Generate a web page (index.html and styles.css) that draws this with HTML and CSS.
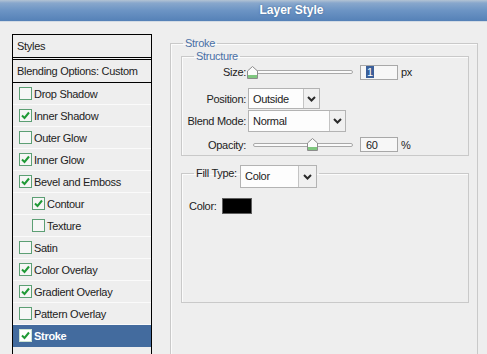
FILE: index.html
```html
<!DOCTYPE html>
<html lang="en">
<head>
    <meta charset="UTF-8">
    <meta name="viewport" content="width=device-width, initial-scale=1.0">
    <title>Layer Style</title>
    <link rel="stylesheet" href="styles.css">
</head>
<body>

    <div class="title-bar">Layer Style</div>

    <div class="dialog-body">
        <ul class="styles-list">
            <li class="styles-head">Styles</li>
            <li class="blend-opts">Blending Options: Custom</li>
            <li class="style-item"><span class="check"></span>Drop Shadow</li>
            <li class="style-item"><span class="check"><svg width="11" height="11" viewBox="0 0 11 11"><path d="M2 5.5 L4.5 8 L9 2.5" /></svg></span>Inner Shadow</li>
            <li class="style-item"><span class="check"></span>Outer Glow</li>
            <li class="style-item"><span class="check"><svg width="11" height="11" viewBox="0 0 11 11"><path d="M2 5.5 L4.5 8 L9 2.5" /></svg></span>Inner Glow</li>
            <li class="style-item"><span class="check"><svg width="11" height="11" viewBox="0 0 11 11"><path d="M2 5.5 L4.5 8 L9 2.5" /></svg></span>Bevel and Emboss</li>
            <li class="style-item sub"><span class="check"><svg width="11" height="11" viewBox="0 0 11 11"><path d="M2 5.5 L4.5 8 L9 2.5" /></svg></span>Contour</li>
            <li class="style-item sub"><span class="check"></span>Texture</li>
            <li class="style-item"><span class="check"></span>Satin</li>
            <li class="style-item"><span class="check"><svg width="11" height="11" viewBox="0 0 11 11"><path d="M2 5.5 L4.5 8 L9 2.5" /></svg></span>Color Overlay</li>
            <li class="style-item"><span class="check"><svg width="11" height="11" viewBox="0 0 11 11"><path d="M2 5.5 L4.5 8 L9 2.5" /></svg></span>Gradient Overlay</li>
            <li class="style-item"><span class="check"></span>Pattern Overlay</li>
            <li class="style-item selected"><span class="check"><svg width="11" height="11" viewBox="0 0 11 11"><path d="M2 5.5 L4.5 8 L9 2.5" /></svg></span>Stroke</li>
        </ul>

        <div class="settings">
            <fieldset class="group group-stroke">
                <legend>Stroke</legend>

                <fieldset class="group group-structure">
                    <legend>Structure</legend>

                    <div class="field-row row-size">
                        <label>Size:</label>
                        <div class="slider">
                            <div class="track"></div>
                            <span class="thumb" style="left: -1px;"><svg width="11" height="13" viewBox="0 0 11 13"><polygon points="5.5,0.5 10.5,5 10.5,12.5 0.5,12.5 0.5,5" fill="#fbfbfb" stroke="#8c8c8c" /><rect x="1" y="9" width="9" height="3" fill="#7fc77f" /></svg></span>
                        </div>
                        <span class="num-input"><span class="sel">1</span></span>
                        <span class="unit">px</span>
                    </div>

                    <div class="field-row row-position">
                        <label>Position:</label>
                        <span class="select select-position">
                            <span class="select-value">Outside</span>
                            <span class="select-arrow"><svg width="9" height="6" viewBox="0 0 9 6"><path d="M1 1 L4.5 4.5 L8 1" /></svg></span>
                        </span>
                    </div>

                    <div class="field-row row-blend">
                        <label>Blend Mode:</label>
                        <span class="select select-blend">
                            <span class="select-value">Normal</span>
                            <span class="select-arrow"><svg width="9" height="6" viewBox="0 0 9 6"><path d="M1 1 L4.5 4.5 L8 1" /></svg></span>
                        </span>
                    </div>

                    <div class="field-row row-opacity">
                        <label>Opacity:</label>
                        <div class="slider">
                            <div class="track"></div>
                            <span class="thumb" style="left: 59px;"><svg width="11" height="13" viewBox="0 0 11 13"><polygon points="5.5,0.5 10.5,5 10.5,12.5 0.5,12.5 0.5,5" fill="#fbfbfb" stroke="#8c8c8c" /><rect x="1" y="9" width="9" height="3" fill="#7fc77f" /></svg></span>
                        </div>
                        <span class="num-input">60</span>
                        <span class="unit">%</span>
                    </div>
                </fieldset>

                <fieldset class="group group-fill">
                    <legend>
                        <span class="fill-label">Fill Type:</span>
                        <span class="select select-fill">
                            <span class="select-value">Color</span>
                            <span class="select-arrow"><svg width="9" height="6" viewBox="0 0 9 6"><path d="M1 1 L4.5 4.5 L8 1" /></svg></span>
                        </span>
                    </legend>

                    <div class="color-row">
                        <span class="color-label">Color:</span>
                        <span class="swatch"></span>
                    </div>
                </fieldset>
            </fieldset>
        </div>
    </div>

</body>
</html>
```

FILE: styles.css
```css
* {
    box-sizing: border-box;
}
html, body {
    margin: 0;
    height: 100%;
    overflow: hidden;
}
body {
    background: #eeeeee;
    font-family: "Liberation Sans", Arial, sans-serif;
    font-size: 11px;
    letter-spacing: -0.3px;
    color: #222;
}

/* title */
.title-bar {
    height: 22px;
    line-height: 21px;
    padding-left: 96px;
    text-align: center;
    color: #fff;
    font-size: 12px;
    font-weight: bold;
    letter-spacing: 0;
    text-shadow: 0 0 2px #3f6593;
    background: linear-gradient(#b3c3d4 0, #88a7cc 3px, #6c94c4 50%, #5581b7 100%);
    border-bottom: 1px solid #d3dbe4;
}

.dialog-body {
    display: flex;
    padding: 12px 0 0 12px;
}

/* styles list */
.styles-list {
    list-style: none;
    margin: 0;
    padding: 0;
    width: 140px;
    height: 321px;
    flex: none;
    border: 1px solid #000;
    overflow: hidden;
}
.styles-head {
    height: 25px;
    line-height: 22px;
    padding-left: 4px;
    border-bottom: 3px double #000;
}
.blend-opts {
    height: 23px;
    line-height: 22px;
    padding-left: 4px;
    border-bottom: 1px solid #000;
}
.style-item {
    display: flex;
    align-items: center;
    height: 22px;
    padding-left: 6px;
    border-bottom: 1px solid #fafafa;
}
.style-item.sub {
    padding-left: 19px;
}
.style-item.selected {
    background: #436b9e;
    color: #fff;
    font-weight: bold;
    border-bottom-color: #436b9e;
}
.check {
    display: flex;
    align-items: center;
    justify-content: center;
    width: 13px;
    height: 13px;
    margin-right: 2px;
    border: 1px solid #5c9f74;
    background: #f6f6f6;
}
.check svg path {
    fill: none;
    stroke: #1f9a36;
    stroke-width: 2;
}
.selected .check {
    background: #fff;
    border-color: #cde3d3;
}

/* settings */
.settings {
    margin: 3px 0 0 18px;
}
.group {
    margin: 0;
    min-width: 0;
    border: 1px solid #c9c9c9;
    box-shadow: inset 1px 1px 0 #fbfbfb;
}
.group legend {
    padding: 0 2px;
    line-height: 13px;
    color: #4a70a6;
}
.group-stroke {
    width: 308px;
    height: 318px;
    padding: 0 8px 0 10px;
}
.group-stroke > legend {
    margin-left: 2px;
}
.group-structure {
    padding: 1px 0 3px 4px;
}
.group-structure > legend {
    margin-left: 8px;
}

.field-row {
    display: flex;
    align-items: center;
}
.field-row label {
    display: flex;
    justify-content: flex-end;
    width: 60px;
    margin-right: 2px;
    white-space: nowrap;
}
.row-size {
    height: 16px;
}
.row-position {
    height: 21px;
    margin-top: 8px;
}
.row-blend {
    height: 22px;
    margin-top: 1px;
}
.row-opacity {
    height: 15px;
    margin-top: 5px;
}

/* slider */
.slider {
    position: relative;
    width: 107px;
    height: 15px;
    display: flex;
    align-items: center;
}
.track {
    width: 100px;
    height: 4px;
    margin-left: 5px;
    border: 1px solid #a9a9a9;
    border-radius: 2px;
    background: #fafafa;
}
.thumb {
    position: absolute;
    top: 1px;
    line-height: 0;
}

.num-input {
    display: flex;
    align-items: center;
    width: 38px;
    height: 15px;
    margin-left: 5px;
    padding-left: 5px;
    border: 1px solid #a8a8a8;
    background: #f7f7f7;
}
.sel {
    background: #3b609a;
    color: #fff;
    padding: 0 1px;
    line-height: 12px;
}
.unit {
    margin-left: 3px;
}

/* dropdowns */
.select {
    display: flex;
    height: 100%;
    border: 1px solid #b3b3b3;
    background: #fdfdfd;
    color: #222;
}
.select-value {
    flex: 1;
    display: flex;
    align-items: center;
    padding-left: 4px;
}
.select-arrow {
    display: flex;
    align-items: center;
    justify-content: center;
    width: 16px;
    border-left: 1px solid #c4c4c4;
    background: #f0f0f0;
}
.select-arrow svg path {
    fill: none;
    stroke: #2a2a2a;
    stroke-width: 2;
}
.select-position {
    width: 72px;
}
.select-blend {
    width: 98px;
}

/* fill type */
.group-fill {
    height: 138px;
    margin-top: 9px;
    padding: 16px 0 0 7px;
}
.group-fill > legend {
    display: flex;
    align-items: flex-start;
    margin-left: 5px;
    color: #222;
}
.fill-label {
    width: 44px;
    margin-top: 2px;
}
.select-fill {
    width: 77px;
    height: 23px;
    margin-bottom: -6px;
}
.select-fill .select-arrow {
    width: 18px;
}
.color-row {
    display: flex;
    align-items: center;
}
.color-label {
    width: 33px;
}
.swatch {
    width: 30px;
    height: 16px;
    border: 1px solid #5f5f5f;
    background: #000;
}
```
